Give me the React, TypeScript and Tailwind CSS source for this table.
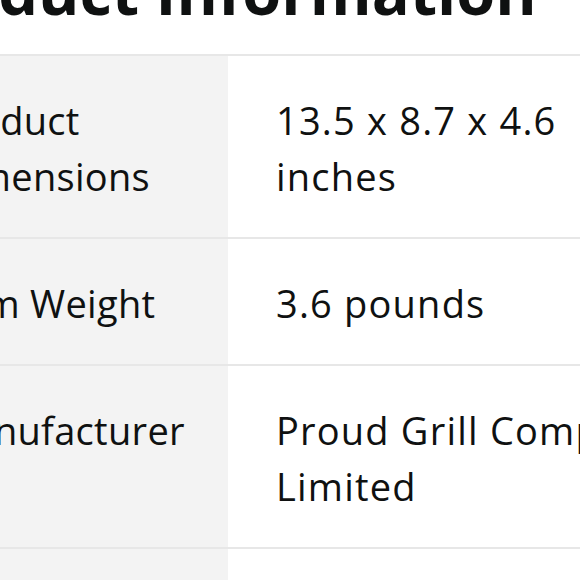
import React from 'react';

const rows: { label: string; value: string }[] = [
    { label: 'Product Dimensions', value: '13.5 x 8.7 x 4.6 inches' },
    { label: 'Item Weight', value: '3.6 pounds' },
    { label: 'Manufacturer', value: 'Proud Grill Company Limited' },
    { label: 'Item model number', value: 'PG-2000' },
];

export default function App() {
    return (
        <div className="w-[580px] h-[580px] overflow-hidden bg-white text-[#0f1111] font-['Open_Sans',sans-serif]">
            <div className="-ml-[110px] -mt-[44px] w-[960px]">
                <h2 className="ml-[1px] h-[70px] leading-[70px] text-[63px] font-bold whitespace-nowrap">
                    Product Information
                </h2>
                <div className="mt-[28px] border-b-2 border-[#e7e7e7]">
                    {rows.map((row) => (
                        <div key={row.label} className="flex border-t-2 border-[#e7e7e7]">
                            <div className="w-[338px] shrink-0 bg-[#f3f3f3] pl-[48px] pr-[20px] pt-[36px] pb-[33px] text-[38px] leading-[56px] tracking-[0.3px]">
                                {row.label}
                            </div>
                            <div className="w-[500px] shrink-0 px-[48px] pt-[36px] pb-[33px] text-[38px] leading-[56px] tracking-[1.2px]">
                                {row.value}
                            </div>
                        </div>
                    ))}
                </div>
            </div>
        </div>
    );
}
